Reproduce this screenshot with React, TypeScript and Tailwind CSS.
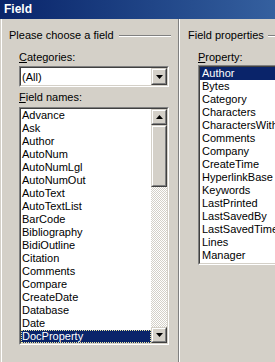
import React from 'react'

const fieldNames = [
  'Advance', 'Ask', 'Author', 'AutoNum', 'AutoNumLgl', 'AutoNumOut', 'AutoText',
  'AutoTextList', 'BarCode', 'Bibliography', 'BidiOutline', 'Citation', 'Comments',
  'Compare', 'CreateDate', 'Database', 'Date', 'DocProperty',
]

const properties = [
  'Author', 'Bytes', 'Category', 'Characters', 'CharactersWithSpaces', 'Comments',
  'Company', 'CreateTime', 'HyperlinkBase', 'Keywords', 'LastPrinted', 'LastSavedBy',
  'LastSavedTime', 'Lines', 'Manager',
]

function Sunken({ className = '', children }: { className?: string; children: React.ReactNode }) {
  return (
    <div className={`border-t border-l border-t-[#808080] border-l-[#808080] border-b border-r border-b-white border-r-white ${className}`}>
      <div className="h-full border-t border-l border-t-[#404040] border-l-[#404040] border-b border-r border-b-[#d4d0c8] border-r-[#d4d0c8] bg-white overflow-hidden">
        {children}
      </div>
    </div>
  )
}

function Raised({ className = '', children }: { className?: string; children?: React.ReactNode }) {
  return (
    <div className={`border-t border-l border-t-[#d4d0c8] border-l-[#d4d0c8] border-b border-r border-b-[#404040] border-r-[#404040] ${className}`}>
      <div className="h-full border-t border-l border-t-white border-l-white border-b border-r border-b-[#808080] border-r-[#808080] bg-[#d4d0c8] flex items-center justify-center">
        {children}
      </div>
    </div>
  )
}

function Arrow({ up = false }: { up?: boolean }) {
  return (
    <svg width="7" height="4" viewBox="0 0 7 4" className="block">
      {up ? <path d="M3.5 0 L7 4 L0 4 Z" fill="#000" /> : <path d="M0 0 L7 0 L3.5 4 Z" fill="#000" />}
    </svg>
  )
}

function Etched({ className = '' }: { className?: string }) {
  return (
    <div className={`flex flex-col ${className}`}>
      <div className="h-px bg-[#808080]" />
      <div className="h-px bg-white" />
    </div>
  )
}

export default function App() {
  return (
    <div className="w-[275px] h-[362px] overflow-hidden bg-[#d4d0c8] text-[11px] leading-[13px] text-black flex flex-col" style={{ fontFamily: '"Liberation Sans", Arial, sans-serif' }}>
      <div className="h-[19px] shrink-0 bg-linear-to-r from-[#0a246a] to-[#35609f] flex items-center pl-[4px]">
        <span className="text-white font-bold text-[12px]">Field</span>
      </div>
      <div className="flex-1 flex pl-px">
        <div className="w-[177px] border-l border-white flex flex-col pl-[7px] pt-[10px]">
          <div className="flex items-center">
            <span>Please choose a field</span>
            <Etched className="flex-1 ml-[5px] mr-[7px]" />
          </div>
          <div className="ml-[10px] mt-[9px] w-[150px] flex flex-col">
            <span><span className="underline">C</span>ategories:</span>
            <Sunken className="mt-[2px] h-[21px]">
              <div className="flex h-full">
                <span className="flex-1 pl-[1px] pt-[3px]">(All)</span>
                <Raised className="w-[16px] h-[17px]"><Arrow /></Raised>
              </div>
            </Sunken>
            <span className="mt-[4px]"><span className="underline">F</span>ield names:</span>
            <Sunken className="mt-[3px] h-[238px]">
              <div className="flex h-full">
                <div className="flex-1 flex flex-col">
                  {fieldNames.map((n) => (
                    <div
                      key={n}
                      className={`h-[13px] pl-[1px] whitespace-nowrap ${n === 'DocProperty' ? 'bg-[#0a246a] text-white outline outline-1 outline-dotted outline-[#e8e4a0] -outline-offset-1' : ''}`}
                    >
                      {n}
                    </div>
                  ))}
                </div>
                <div className="w-[16px] flex flex-col bg-[repeating-conic-gradient(#ffffff_0%_25%,#d4d0c8_0%_50%)] bg-[length:2px_2px]">
                  <Raised className="h-[16px]"><Arrow up /></Raised>
                  <Raised className="h-[62px]" />
                  <div className="flex-1" />
                  <Raised className="h-[16px]"><Arrow /></Raised>
                </div>
              </div>
            </Sunken>
          </div>
        </div>
        <div className="w-[2px] flex">
          <div className="w-px bg-[#808080]" />
          <div className="w-px bg-white" />
        </div>
        <div className="flex-1 flex flex-col pl-[8px] pt-[10px] min-w-0">
          <div className="flex items-center">
            <span className="whitespace-nowrap">Field properties</span>
            <Etched className="flex-1 ml-[4px]" />
          </div>
          <div className="ml-[10px] mt-[9px] flex flex-col">
            <span><span className="underline">P</span>roperty:</span>
            <Sunken className="mt-[1px] h-[200px] w-[120px]">
              <div className="flex flex-col">
                {properties.map((p) => (
                  <div
                    key={p}
                    className={`h-[13px] pl-[2px] whitespace-nowrap ${p === 'Author' ? 'bg-[#0a246a] text-white' : ''}`}
                  >
                    {p}
                  </div>
                ))}
              </div>
            </Sunken>
          </div>
        </div>
      </div>
    </div>
  )
}
